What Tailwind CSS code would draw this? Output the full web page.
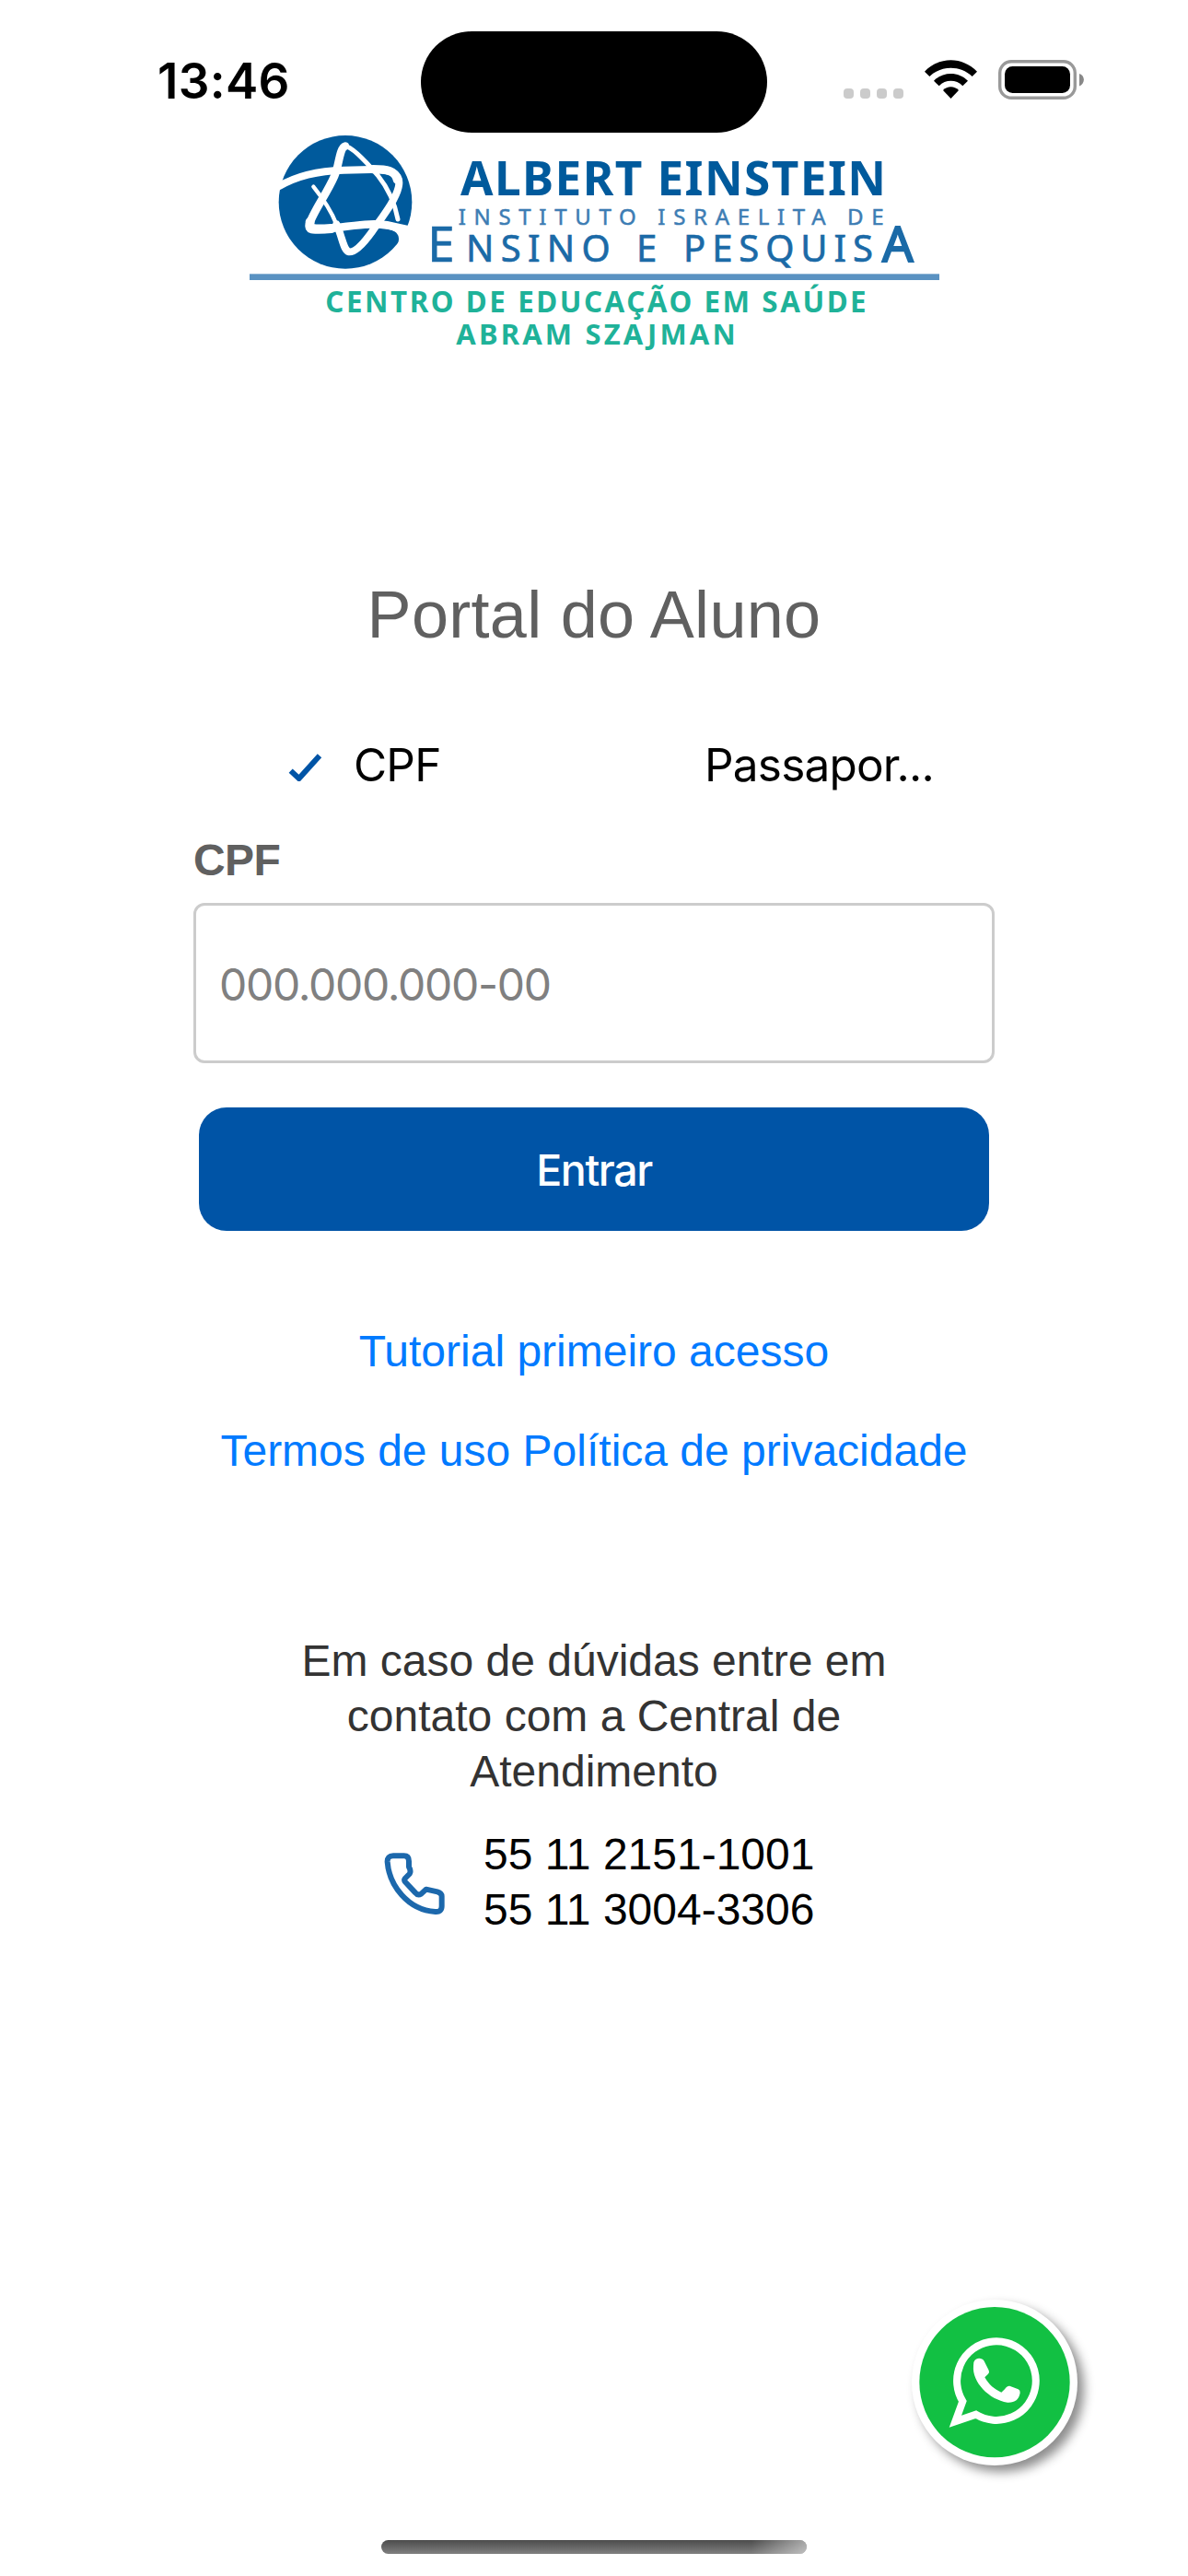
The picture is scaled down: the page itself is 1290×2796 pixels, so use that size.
<!DOCTYPE html>
<html lang="pt-BR">
<head>
  <meta charset="UTF-8">
  <meta name="viewport" content="width=device-width, initial-scale=1.0">
  <title>Portal do Aluno</title>
  <script src="https://cdn.jsdelivr.net/npm/@tailwindcss/browser@4"></script>
</head>
<body class="bg-white font-['Liberation_Sans',Arial,sans-serif]">
  <div class="relative flex h-[2796px] w-[1290px] flex-col items-center overflow-hidden">

    <!-- Barra de status -->
    <header class="flex h-[144px] w-full shrink-0 items-start pl-[171px] pt-[34px]">
      <div class="mt-[21px] w-[286px] font-['Inter',sans-serif] text-[53px] leading-[66px] font-semibold tracking-[0.3px]">13:46</div>
      <div class="h-[110px] w-[376px] rounded-full bg-black"></div>
      <div class="mt-[31px] ml-[83px] flex items-start">
        <div class="mt-[31px] flex gap-[7px]">
          <span class="size-[11px] rounded-[4px] bg-[#cbcbcb]"></span>
          <span class="size-[11px] rounded-[4px] bg-[#cbcbcb]"></span>
          <span class="size-[11px] rounded-[4px] bg-[#cbcbcb]"></span>
          <span class="size-[11px] rounded-[4px] bg-[#cbcbcb]"></span>
        </div>
        <svg class="ml-[22px] h-[43px] w-[59px]" viewBox="0 0 177 129">
          <path d="M3 38C51-12 126-12 174 38L158 54C119 17 58 17 19 54Z"/>
          <path d="M33 68C64 37 113 37 144 68L127 85C106 63 71 63 50 85Z"/>
          <path d="M63 99C77 84 100 84 114 99L88.500 126Z"/>
        </svg>
        <svg class="ml-[22px] h-[43px] w-[94px]" viewBox="0 0 94 43">
          <rect x="1.700" y="1.700" width="81.600" height="39.600" rx="12.500" fill="none" stroke="#999" stroke-width="3.400"/>
          <rect x="7" y="7" width="71" height="29" rx="8.500"/>
          <path d="M88 15C94.500 17 94.500 26 88 28.500Z" fill="#888"/>
        </svg>
      </div>
    </header>

    <!-- Logo -->
    <svg class="-mt-[14px] ml-[10px] h-[260px] w-[780px] shrink-0" viewBox="0 0 2340 780" font-family="'Noto Sans', sans-serif" fill="#005a9c">
      <circle cx="345" cy="268" r="217"/>
      <g fill="none" stroke="#fff" stroke-linecap="round" stroke-linejoin="round">
        <path d="M128 217C190 180 260 166 340 164L430 162C500 160 528 178 518 220C508 262 470 310 435 360C400 410 375 432 357 430C338 425 335 380 316 340" stroke-width="24"/>
        <path d="M316 340C300 300 275 260 241 218" stroke-width="13"/>
        <path d="M345 86C325 92 325 150 310 182C285 240 240 300 228 340C222 364 245 358 290 355C370 345 430 335 480 343L548 358" stroke-width="26"/>
        <path d="M345 86C370 88 420 145 450 180C490 230 508 280 516 324" stroke-width="15"/>
        <path d="M435 161C480 161 508 165 514 195" stroke-width="28"/>
        <path d="M230 332C226 358 240 358 300 354" stroke-width="30"/>
      </g>
      <path d="M460 354C500 355 520 366 519 390C518 408 505 420 490 432L575 400L555 350Z" fill="#fff"/>
      <text x="720" y="245" font-size="154" font-weight="700" textLength="1386">ALBERT EINSTEIN</text>
      <text x="713" y="341" font-size="72" textLength="1386" fill="#3d7db4" stroke="#3d7db4" stroke-width="1.500">INSTITUTO ISRAELITA DE</text>
      <g fill="#1b6aa7" stroke="#1b6aa7" stroke-width="2">
        <text x="613" y="461" font-size="158">E</text>
        <text x="738" y="461" font-size="120" textLength="470">NSINO</text>
        <text x="1293" y="461" font-size="120">E</text>
        <text x="1446" y="461" font-size="120" textLength="618">PESQUIS</text>
        <text x="2094" y="461" font-size="158" stroke-width="6">A</text>
      </g>
      <rect x="33" y="502" width="2247" height="20" fill="#5a92c2"/>
      <g fill="#1fb299" font-weight="700">
        <text x="280" y="627" font-size="94" textLength="1762">CENTRO DE EDUCAÇÃO EM SAÚDE</text>
        <text x="706" y="731" font-size="93" textLength="910">ABRAM SZAJMAN</text>
      </g>
    </svg>

    <main class="flex w-[870px] flex-col items-center">
      <h1 class="mt-[236px] text-[72px] leading-[82px] tracking-[0.3px] text-[#606060]">Portal do Aluno</h1>

      <!-- Tipo de documento -->
      <div class="mt-[92px] flex w-full items-center font-['Inter',sans-serif] text-[49.5px] leading-[60px] tracking-[-0.8px]">
        <div class="flex w-[435px] items-center pl-[103px]">
          <svg class="mt-[6px] h-[30px] w-[37px]" viewBox="0 0 111 90">
            <path d="M8 56L35 81L102 7" fill="none" stroke="#0054a6" stroke-width="18"/>
          </svg>
          <span class="ml-[34px]">CPF</span>
        </div>
        <div class="pl-[120px]">Passapor...</div>
      </div>

      <label class="mt-[46px] w-full text-5xl leading-[56px] font-bold tracking-[-0.6px] text-[#606060]">CPF</label>
      <input type="text" placeholder="000.000.000-00" class="mt-[18px] h-[174px] w-full rounded-[12px] border-3 border-[#ccc] px-[25px] pt-[3px] font-['Inter',sans-serif] text-[48px] tracking-[-1.3px] placeholder:text-[#808080]">
      <button class="mt-12 h-[134px] w-[858px] rounded-[30px] bg-[#0054a6] pt-[3px] font-['Inter',sans-serif] text-[46.5px] font-medium tracking-[-1.4px] text-white">Entrar</button>

      <a class="mt-[103px] text-5xl leading-[56px] text-[#007aff]">Tutorial primeiro acesso</a>
      <a class="mt-[52px] text-5xl leading-[56px] text-[#007aff]">Termos de uso Política de privacidade</a>

      <!-- Central de atendimento -->
      <p class="mt-[170px] w-[660px] text-center text-5xl leading-[60px] text-[#333]">Em caso de dúvidas entre em contato com a Central de Atendimento</p>
      <div class="mt-[30px] flex w-full items-center pl-[206px] text-5xl leading-[60px]">
        <svg class="h-[70px] w-[70px]" viewBox="0 0 210 210" fill="none" stroke="#1c68ac" stroke-width="18" stroke-linejoin="round">
          <path d="M33 19H68Q84 19 84 37V55Q92 68 86 78L71 93Q67 98 73 105L105 139Q113 149 124 143L140 128L177 136Q191 140 191 151V183Q191 202 170 201C80 195 20 115 14 39Q13 19 33 19Z"/>
        </svg>
        <div class="ml-[39px]">
          <p>55 11 2151-1001</p>
          <p>55 11 3004-3306</p>
        </div>
      </div>
    </main>

    <!-- Botão WhatsApp -->
    <button class="absolute top-[2496px] left-[990px] flex size-[180px] items-center justify-center rounded-full bg-white shadow-[7px_7px_12px_rgba(0,0,0,0.45)]">
      <svg class="size-[180px]" viewBox="0 0 540 540">
        <circle cx="270" cy="269" r="245" fill="#12c043"/>
        <path d="M166 331A128.500 128.500 0 1 1 209 374L142 397Z" fill="none" stroke="#fff" stroke-width="24"/>
        <path d="M202 204C208 188 228 188 236 200L251 230Q254 236 249 242L238 253C250 276 270 293 292 302L303 292Q310 280 319 281L347 292Q354 295 353 304C349 328 335 336 312 335C252 326 196 268 201 216Z" fill="#fff"/>
      </svg>
    </button>

    <!-- Indicador inicial -->
    <div class="absolute top-[2757px] left-[414px] h-[15px] w-[462px] overflow-hidden rounded-full bg-linear-to-b from-[#4c4c4c] to-[#808080]">
      <div class="ml-auto h-full w-[60px] bg-linear-to-r from-white/0 to-white/50"></div>
    </div>
  </div>
</body>
</html>
